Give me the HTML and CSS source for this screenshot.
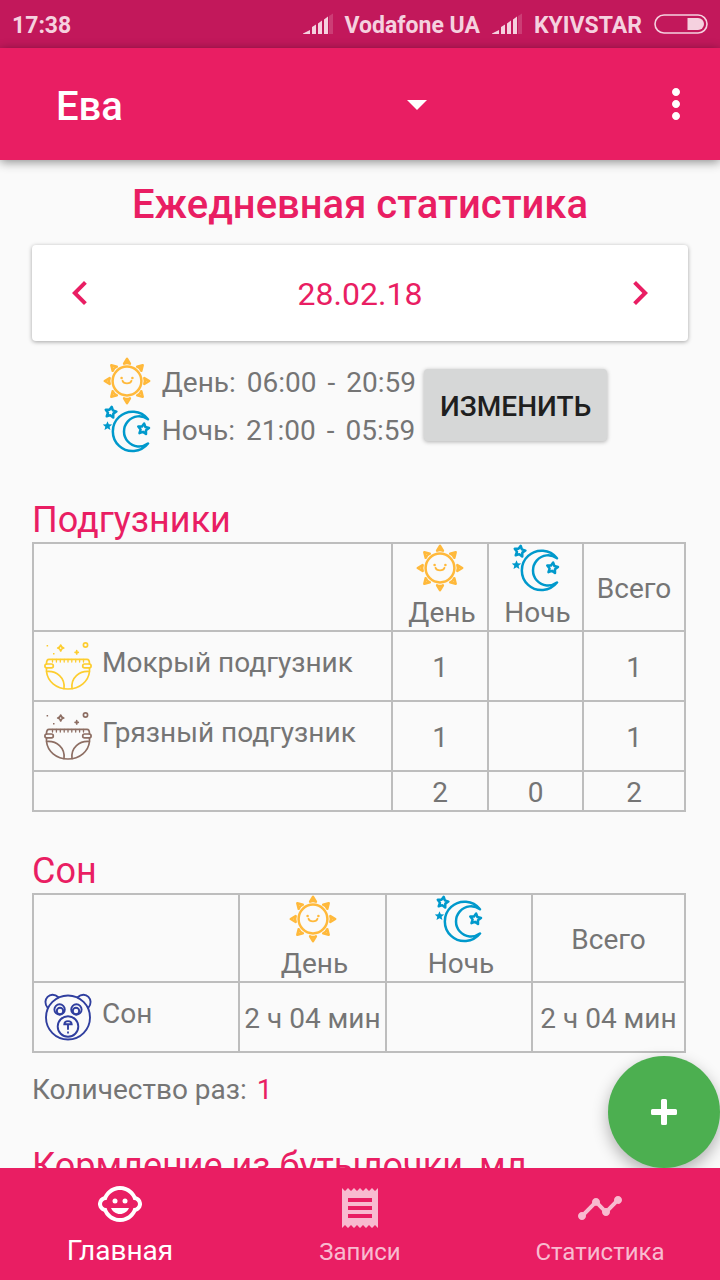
FILE: index.html
```html
<!DOCTYPE html>
<html lang="ru">
<head>
<meta charset="utf-8">
<meta name="viewport" content="width=device-width, initial-scale=1">
<title>Ежедневная статистика</title>
<link rel="stylesheet" href="styles.css">
</head>
<body>
<svg class="sprite" aria-hidden="true">
  <symbol id="sun" viewBox="0 0 48 48">
    <g fill="none" stroke="currentColor" stroke-width="2.500" stroke-linejoin="round" stroke-linecap="round">
      <circle cx="24" cy="24" r="14.400"/>
      <path id="ray" d="M24 1.800l-2.900 4.900q2.900-1.200 5.800 0z"/>
      <use href="#ray" transform="rotate(45 24 24)"/>
      <use href="#ray" transform="rotate(90 24 24)"/>
      <use href="#ray" transform="rotate(135 24 24)"/>
      <use href="#ray" transform="rotate(180 24 24)"/>
      <use href="#ray" transform="rotate(225 24 24)"/>
      <use href="#ray" transform="rotate(270 24 24)"/>
      <use href="#ray" transform="rotate(315 24 24)"/>
      <path d="M19.500 23.800c1.200 3.400 7.800 3.400 9 0" stroke-width="1.900"/>
    </g>
    <circle cx="18.600" cy="21" r="1.300" fill="currentColor"/>
    <circle cx="29.400" cy="21" r="1.300" fill="currentColor"/>
  </symbol>
  <symbol id="moon" viewBox="0 0 48 48">
    <g fill="none" stroke="currentColor" stroke-width="2.500" stroke-linejoin="round" stroke-linecap="round">
      <path d="M45 14.200A19.700 19.700 0 1 0 45 38.600A15.100 15.100 0 1 1 45 14.200z"/>
      <path d="M0-5.500L1.700-2.300 5.400-1.700 2.700.9 3.300 4.600 0 2.900-3.300 4.600-2.700.9-5.400-1.700-1.700-2.300z" transform="translate(7.800 7.300) rotate(10)"/>
      <path d="M0-5.500L1.700-2.300 5.400-1.700 2.700.9 3.300 4.600 0 2.900-3.300 4.600-2.700.9-5.400-1.700-1.700-2.300z" transform="translate(40.400 24) rotate(8)"/>
    </g>
    <path fill="currentColor" d="M4.500 16.200l1.300 3.100 3.400.2-2.600 2.200.8 3.400-2.900-1.800-3 1.800.8-3.400L-.2 19.500l3.400-.2z"/>
  </symbol>
  <symbol id="diaper" viewBox="0 0 48 48">
    <g fill="none" stroke="currentColor" stroke-width="1.700" stroke-linejoin="round" stroke-linecap="round">
      <path d="M2.500 22c0-3 .8-4.600 2.500-4.600h38c1.700 0 2.500 1.600 2.500 4.600M2.500 26v3.500C3.500 39 12 47 24 47s20.500-8 21.500-17.500V26"/>
      <rect x=".9" y="22" width="8.400" height="3.800" rx="1.900"/>
      <rect x="38.700" y="22" width="8.400" height="3.800" rx="1.900"/>
      <path d="M2.700 29.500c10-.8 18.500 6 17.300 17M45.300 29.500c-10-.8-18.500 6-17.300 17"/>
      <path stroke-width="1.300" d="M8.500 17.500v2.500M12.400 17.500v2.500M16.300 17.500v2.500M20.200 17.500v2.500M24 17.500v2.500M27.800 17.500v2.500M31.700 17.500v2.500M35.600 17.500v2.500M39.500 17.500v2.500"/>
      <path d="M16.700 3q.6 2.400 3 3-2.400.6-3 3-.6-2.400-3-3 2.400-.6 3-3zM32.700 8.700v3.200M31.100 10.300h3.200"/>
      <circle cx="41.500" cy="3" r="2.100"/>
    </g>
    <path fill="currentColor" d="M2.600 3h1.500v1.500H2.600zM9 11h1.500v1.500H9z"/>
  </symbol>
  <symbol id="bear" viewBox="0 0 48 48">
    <g fill="none" stroke="currentColor" stroke-width="1.900" stroke-linecap="round">
      <circle cx="24" cy="24.500" r="22"/>
      <path d="M3.700 14.800C-3 7 6.500-3 14.400 4.300M44.300 14.800C51 7 41.500-3 33.600 4.300"/>
      <circle cx="15.600" cy="16.500" r="5.200"/>
      <circle cx="32.400" cy="16.500" r="5.200"/>
      <circle cx="16" cy="18" r="3.200"/>
      <circle cx="32" cy="18" r="3.200"/>
      <circle cx="24" cy="33.500" r="10.300"/>
      <path d="M20.300 31.300c.3-4.200 7.100-4.200 7.400 0zM24 31.500v4.500"/>
    </g>
    <path fill="currentColor" d="M23.100 38.600h1.800v1.800h-1.800z"/>
  </symbol>
  <symbol id="signal" viewBox="0 0 30 22">
    <path fill="currentColor" d="M0 20.500L7 17v4H0zM9 14l4-2.500V21H9zM15 10.500l4-3V21h-4zM21 6.500l4-3V21h-4z"/>
    <path fill="currentColor" opacity=".2" d="M26 3l4-2.500V21h-4z"/>
  </symbol>
</svg>

<div class="status-bar">
  <span class="clock">17:38</span>
  <svg class="signal"><use href="#signal"/></svg>
  <span class="carrier">Vodafone UA</span>
  <svg class="signal"><use href="#signal"/></svg>
  <span class="carrier">KYIVSTAR</span>
  <svg class="battery" viewBox="0 0 54 20"><rect x="1" y="1" width="52" height="18" rx="9" fill="none" stroke="currentColor" stroke-width="1.600"/><path fill="currentColor" d="M33.500 4H44a6 6 0 0 1 0 12H33.500z"/></svg>
</div>

<header class="app-bar">
  <div class="child-picker">
    <select class="child-select" aria-label="Ребёнок"><option>Ева</option></select>
    <svg class="icon child-arrow" viewBox="0 0 24 24" aria-hidden="true"><path fill="currentColor" d="M7 10l5 5 5-5z"/></svg>
  </div>
  <button class="icon-button" type="button" aria-label="Меню">
    <svg class="icon" viewBox="0 0 24 24"><path fill="currentColor" d="M12 8c1.100 0 2-.9 2-2s-.9-2-2-2-2 .9-2 2 .9 2 2 2zm0 2c-1.100 0-2 .9-2 2s.9 2 2 2 2-.9 2-2-.9-2-2-2zm0 6c-1.100 0-2 .9-2 2s.9 2 2 2 2-.9 2-2-.9-2-2-2z"/></svg>
  </button>
</header>

<div class="stage">
  <main class="content">
    <h1 class="title">Ежедневная статистика</h1>
    <div class="date-card">
      <button class="icon-button" type="button" aria-label="Предыдущий день"><svg class="icon" viewBox="0 0 24 24"><path fill="currentColor" d="M15.410 7.410L14 6l-6 6 6 6 1.410-1.410L10.830 12z"/></svg></button>
      <span class="date">28.02.18</span>
      <button class="icon-button" type="button" aria-label="Следующий день"><svg class="icon" viewBox="0 0 24 24"><path fill="currentColor" d="M10 6L8.590 7.410 13.170 12l-4.580 4.590L10 18l6-6z"/></svg></button>
    </div>

    <div class="periods">
      <div class="period-list">
        <div class="period"><svg class="icon sun"><use href="#sun"/></svg><span>День:</span><span>06:00</span><span>-</span><span>20:59</span></div>
        <div class="period"><svg class="icon moon"><use href="#moon"/></svg><span>Ночь:</span><span>21:00</span><span>-</span><span>05:59</span></div>
      </div>
      <button class="change-button" type="button">ИЗМЕНИТЬ</button>
    </div>

    <h2 class="section-title first">Подгузники</h2>
    <table class="stats diapers">
      <colgroup><col class="col-name"><col class="col-day"><col class="col-night"><col class="col-total"></colgroup>
      <thead>
        <tr>
          <td></td>
          <th class="head-period" scope="col"><svg class="icon sun"><use href="#sun"/></svg><span class="head-text">День</span></th>
          <th class="head-period" scope="col"><svg class="icon moon"><use href="#moon"/></svg><span class="head-text">Ночь</span></th>
          <th scope="col">Всего</th>
        </tr>
      </thead>
      <tbody>
        <tr><th class="head-row" scope="row"><div class="row-label"><svg class="icon wet"><use href="#diaper"/></svg><span>Мокрый подгузник</span></div></th><td>1</td><td></td><td>1</td></tr>
        <tr><th class="head-row" scope="row"><div class="row-label"><svg class="icon dirty"><use href="#diaper"/></svg><span>Грязный подгузник</span></div></th><td>1</td><td></td><td>1</td></tr>
      </tbody>
      <tfoot>
        <tr><td></td><td>2</td><td>0</td><td>2</td></tr>
      </tfoot>
    </table>

    <h2 class="section-title">Сон</h2>
    <table class="stats sleep">
      <colgroup><col class="col-name"><col class="col-day"><col class="col-night"><col class="col-total"></colgroup>
      <thead>
        <tr>
          <td></td>
          <th class="head-period" scope="col"><svg class="icon sun"><use href="#sun"/></svg><span class="head-text">День</span></th>
          <th class="head-period" scope="col"><svg class="icon moon"><use href="#moon"/></svg><span class="head-text">Ночь</span></th>
          <th scope="col">Всего</th>
        </tr>
      </thead>
      <tbody>
        <tr><th class="head-row" scope="row"><div class="row-label"><svg class="icon bear"><use href="#bear"/></svg><span>Сон</span></div></th><td>2 ч 04 мин</td><td></td><td>2 ч 04 мин</td></tr>
      </tbody>
    </table>
    <p class="count"><span>Количество раз:</span><span class="count-value">1</span></p>

    <h2 class="section-title">Кормление из бутылочки, мл</h2>
  </main>
  <button class="fab" type="button" aria-label="Добавить">
    <svg class="fab-icon" viewBox="0 0 26 26"><path fill="currentColor" d="M11.500 0h3a1.500 1.500 0 0 1 1.500 1.500V10h8.500a1.500 1.500 0 0 1 1.500 1.500v3a1.500 1.500 0 0 1-1.500 1.500H16v8.500a1.500 1.500 0 0 1-1.500 1.500h-3a1.500 1.500 0 0 1-1.500-1.500V16H1.500A1.500 1.500 0 0 1 0 14.500v-3A1.500 1.500 0 0 1 1.500 10H10V1.500A1.500 1.500 0 0 1 11.500 0z"/></svg>
  </button>
</div>

<nav class="tabs">
  <a class="tab active" href="#main" aria-current="page">
    <svg class="icon" viewBox="0 0 24 24"><g fill="currentColor"><circle cx="14.500" cy="10.500" r="1.250"/><circle cx="9.500" cy="10.500" r="1.250"/><path d="M22.940 12.660c.04-.21.06-.43.06-.66s-.02-.45-.06-.66c-.25-1.510-1.360-2.740-2.810-3.170-.53-1.120-1.280-2.100-2.190-2.910C16.360 3.850 14.280 3 12 3s-4.360.85-5.940 2.260c-.92.81-1.670 1.800-2.190 2.910-1.450.43-2.560 1.650-2.810 3.170-.04.21-.06.43-.06.66s.02.45.06.66c.25 1.510 1.360 2.740 2.810 3.170.52 1.110 1.270 2.090 2.170 2.890C7.620 20.140 9.710 21 12 21s4.380-.86 5.970-2.280c.9-.8 1.650-1.790 2.170-2.890 1.440-.43 2.550-1.650 2.800-3.170zM19 14c-.1 0-.19-.02-.29-.03-.2.67-.49 1.290-.86 1.860C16.600 17.740 14.450 19 12 19s-4.600-1.260-5.850-3.170c-.37-.57-.66-1.190-.86-1.860-.1.010-.19.030-.29.030-1.100 0-2-.9-2-2s.9-2 2-2c.1 0 .19.020.29.030.2-.67.49-1.290.86-1.860C7.400 6.260 9.550 5 12 5s4.600 1.260 5.850 3.170c.37.57.66 1.190.86 1.860.1-.01.19-.03.29-.03 1.100 0 2 .9 2 2s-.9 2-2 2zM7.500 14c.76 1.770 2.490 3 4.500 3s3.740-1.230 4.500-3h-9z"/></g></svg>
    <span>Главная</span>
  </a>
  <a class="tab" href="#records">
    <svg class="icon" viewBox="0 0 24 24"><path fill="currentColor" d="M18 17H6v-2h12v2zm0-4H6v-2h12v2zm0-4H6V7h12v2zM3 22l1.500-1.500L6 22l1.500-1.500L9 22l1.500-1.500L12 22l1.500-1.500L15 22l1.500-1.500L18 22l1.500-1.500L21 22V2l-1.500 1.500L18 2l-1.500 1.500L15 2l-1.500 1.500L12 2l-1.500 1.500L9 2 7.500 3.500 6 2 4.500 3.500 3 2v20z"/></svg>
    <span>Записи</span>
  </a>
  <a class="tab" href="#stats">
    <svg class="icon" viewBox="0 0 24 24"><path fill="currentColor" d="M23 8c0 1.100-.9 2-2 2-.18 0-.35-.02-.51-.07l-3.560 3.550c.05.16.07.34.07.52 0 1.100-.9 2-2 2s-2-.9-2-2c0-.18.02-.36.07-.52l-2.550-2.550c-.16.05-.34.07-.52.07s-.36-.02-.52-.07l-4.550 4.560c.05.16.07.33.07.51 0 1.100-.9 2-2 2s-2-.9-2-2 .9-2 2-2c.18 0 .35.02.51.07l4.560-4.550C8.020 9.360 8 9.180 8 9c0-1.100.9-2 2-2s2 .9 2 2c0 .18-.02.36-.07.52l2.550 2.550c.16-.05.34-.07.52-.07s.36.02.52.07l3.550-3.560C19.020 8.350 19 8.180 19 8c0-1.100.9-2 2-2s2 .9 2 2z"/></svg>
    <span>Статистика</span>
  </a>
</nav>
</body>
</html>
```

FILE: styles.css
```css
* { box-sizing: border-box; }

:root {
  --pink: #e91e63;
  --gray: #757575;
  --line: #bdbdbd;
}

body {
  margin: 0;
  height: 100vh;
  display: flex;
  flex-direction: column;
  overflow: hidden;
  background: #fafafa;
  color: var(--gray);
  font: 400 28px/38px Roboto, "Noto Sans", sans-serif;
}

button, select { font: inherit; border: 0; padding: 0; margin: 0; background: none; color: inherit; }
button { cursor: pointer; }

.sprite { display: none; }
.icon { display: block; width: 48px; height: 48px; flex: none; }
.sun { color: #ffb93b; }
.moon { color: #0099cc; }
.wet { color: #fdcd2f; }
.dirty { color: #8d6e63; }
.bear { color: #303f9f; }

.status-bar {
  flex: none;
  height: 48px;
  padding: 0 12px;
  display: flex;
  align-items: center;
  background: #c2185b;
  color: #f5d1df;
  font-size: 23px;
  font-weight: 700;
  line-height: 28px;
}
.clock { margin-right: auto; padding-top: 4px; }
.signal { width: 30px; height: 22px; }
.carrier { padding: 4px 12px 0; }
.battery { width: 54px; height: 20px; }

.app-bar {
  flex: none;
  height: 112px;
  padding: 0 20px 0 56px;
  display: flex;
  align-items: center;
  justify-content: space-between;
  background: var(--pink);
  color: #fff;
  box-shadow: 0 2px 10px rgba(0, 0, 0, .45);
  position: relative;
  z-index: 1;
}
.child-picker { flex: 0 1 385px; display: grid; align-items: center; }
.child-select {
  grid-area: 1 / 1;
  width: 100%;
  padding-top: 6px;
  appearance: none;
  font-size: 40px;
  font-weight: 500;
  line-height: 48px;
}
.child-arrow { grid-area: 1 / 1; justify-self: end; pointer-events: none; }

.stage { flex: 1; min-height: 0; position: relative; }
.content { height: 100%; overflow: hidden; padding: 21px 32px 0; }

.title {
  margin: 0 0 16px;
  text-align: center;
  font-size: 40px;
  font-weight: 500;
  line-height: 48px;
  color: var(--pink);
}
.date-card {
  height: 96px;
  padding: 0 24px;
  display: flex;
  align-items: center;
  justify-content: space-between;
  background: #fff;
  color: var(--pink);
  border-radius: 4px;
  box-shadow: 0 1px 4px rgba(0, 0, 0, .35);
}
.date { font-size: 32px; padding-top: 2px; }

.periods {
  margin: 16px 10px 0 0;
  display: flex;
  justify-content: center;
  align-items: center;
  gap: 8px;
}
.period { height: 48px; display: flex; align-items: center; gap: 11px; white-space: nowrap; }
.period span { padding-top: 4px; }
.change-button {
  height: 72px;
  padding: 4px 16px 0;
  border-radius: 4px;
  background: #d6d7d7;
  color: #1f1f1f;
  font-weight: 500;
  box-shadow: 0 1px 4px rgba(0, 0, 0, .3);
}

.section-title {
  margin: 38px 0 0;
  padding-bottom: 1px;
  font-size: 36px;
  font-weight: 400;
  line-height: 42px;
  color: var(--pink);
}
.section-title.first { margin-top: 46px; }

.stats { width: calc(100% - 2px); table-layout: fixed; border-collapse: collapse; text-align: center; line-height: 34px; }
.stats th, .stats td { border: 2px solid var(--line); padding: 4px 0 0; font-weight: 400; white-space: nowrap; }
.stats .head-period { padding: 0; }
.stats .head-row { padding: 0; }
.head-period .icon { margin: 0 auto; }
.head-text { display: block; padding: 4px 0 0 4px; }
.stats thead td, .stats thead th { height: 88px; }
.stats tfoot td { height: 40px; }
.diapers .col-day { width: 96px; }
.diapers .col-night { width: 95px; }
.diapers .col-total { width: 102px; }
.sleep .col-day { width: 147px; }
.sleep .col-night { width: 146px; }
.sleep .col-total { width: 153px; }
.row-label { display: flex; gap: 10px; padding: 10px; line-height: 42px; }

.count { margin: 18px 0 0; display: flex; gap: 10px; }
.count-value { color: var(--pink); }
.count + .section-title { margin-top: 36px; }

.fab {
  position: absolute;
  right: 0;
  bottom: 0;
  width: 112px;
  height: 112px;
  display: grid;
  place-items: center;
  border-radius: 50%;
  background: #4caf50;
  color: #fff;
  box-shadow: 0 6px 16px rgba(0, 0, 0, .3);
}
.fab-icon { width: 26px; height: 26px; }

.tabs {
  flex: none;
  height: 112px;
  display: grid;
  grid-template-columns: repeat(3, 1fr);
  background: var(--pink);
  position: relative;
}
.tab {
  display: flex;
  flex-direction: column;
  align-items: center;
  gap: 4px;
  padding-top: 16px;
  color: #f8bbd0;
  font-size: 24px;
  line-height: 32px;
  text-decoration: none;
}
.tab.active { padding-top: 12px; gap: 7px; color: #fff; font-size: 28px; }
```
